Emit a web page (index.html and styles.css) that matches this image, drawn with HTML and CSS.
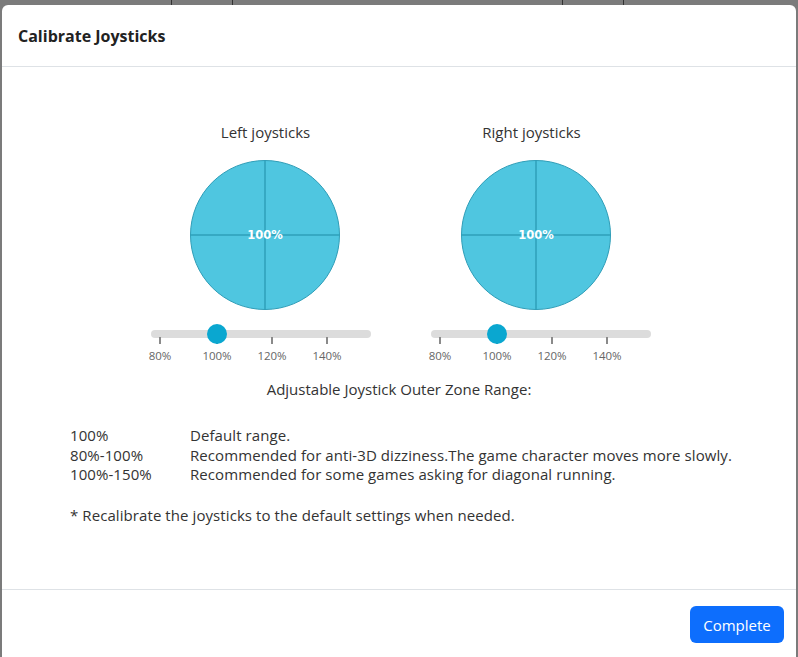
FILE: index.html
```html
<!DOCTYPE html>
<html>
<head>
<meta charset="utf-8">
<link rel="stylesheet" href="styles.css">
</head>
<body>
<div class="backdrop">
  <div class="strip">
    <span class="vline l1"></span><span class="vline l2"></span><span class="vline l3"></span><span class="vline l4"></span>
  </div>
  <div class="modal">
    <div class="modal-header">
      <h1 class="title">Calibrate Joysticks</h1>
    </div>
    <div class="modal-body">
      <div class="sticks">
        <div class="stick stick-left">
          <div class="stick-label">Left joysticks</div>
          <div class="circle"><span class="hline"></span><span class="vl"></span><span class="pct">100%</span></div>
          <div class="slider">
            <div class="track"></div>
            <span class="thumb" style="left:66px"></span>
            <span class="tick" style="left:9px"></span>
            <span class="tick" style="left:66px"></span>
            <span class="tick" style="left:121px"></span>
            <span class="tick" style="left:176px"></span>
            <span class="tlabel" style="left:9px">80%</span>
            <span class="tlabel" style="left:66px">100%</span>
            <span class="tlabel" style="left:121px">120%</span>
            <span class="tlabel" style="left:176px">140%</span>
          </div>
        </div>
        <div class="stick stick-right">
          <div class="stick-label">Right joysticks</div>
          <div class="circle"><span class="hline"></span><span class="vl"></span><span class="pct">100%</span></div>
          <div class="slider">
            <div class="track"></div>
            <span class="thumb" style="left:66px"></span>
            <span class="tick" style="left:9px"></span>
            <span class="tick" style="left:66px"></span>
            <span class="tick" style="left:121px"></span>
            <span class="tick" style="left:176px"></span>
            <span class="tlabel" style="left:9px">80%</span>
            <span class="tlabel" style="left:66px">100%</span>
            <span class="tlabel" style="left:121px">120%</span>
            <span class="tlabel" style="left:176px">140%</span>
          </div>
        </div>
      </div>
      <div class="range-title">Adjustable Joystick Outer Zone Range:</div>
      <div class="ranges">
        <div class="r-key">100%</div><div class="r-val">Default range.</div>
        <div class="r-key">80%-100%</div><div class="r-val">Recommended for anti-3D dizziness.The game character moves more slowly.</div>
        <div class="r-key">100%-150%</div><div class="r-val">Recommended for some games asking for diagonal running.</div>
      </div>
      <div class="note">* Recalibrate the joysticks to the default settings when needed.</div>
    </div>
    <div class="modal-footer">
      <button class="btn">Complete</button>
    </div>
  </div>
</div>
</body>
</html>
```
FILE: styles.css
```css
* { box-sizing: border-box; }
html, body { margin: 0; padding: 0; }
body {
  width: 798px; height: 657px; overflow: hidden;
  background: #7b7b7b;
  font-family: "Open Sans", "Noto Sans", sans-serif;
  color: #333;
}
.backdrop { display: flex; flex-direction: column; height: 657px; }
.strip { position: relative; height: 5px; flex: none; }
.vline { position: absolute; top: 0; width: 1px; height: 5px; background: #333; }
.l1 { left: 171px; } .l2 { left: 232px; } .l3 { left: 562px; } .l4 { left: 623px; }
.modal {
  margin-left: 2px; width: 794px; flex: 1;
  background: #fff; border-radius: 6px 6px 0 0;
  display: flex; flex-direction: column;
}
.modal-header {
  height: 62px; flex: none; padding: 0 16px;
  display: flex; align-items: center;
  border-bottom: 1px solid #dee2e6;
}
.title { margin: 0; font-size: 16px; font-weight: 700; color: #222; }
.modal-body { flex: 1; padding-top: 55px; }
.sticks { display: flex; justify-content: center; gap: 60px; padding-left: 4px; }
.stick { width: 220px; display: flex; flex-direction: column; align-items: center; }
.stick-label { font-size: 15px; line-height: 20px; color: #333; }
.stick-left .stick-label { margin-left: 9px; }
.stick-right .stick-label { margin-right: 19px; }
.stick-left .circle { margin-left: 8px; }
.stick-right .circle { margin-right: 10px; }
.circle {
  position: relative; margin-top: 18px;
  width: 150px; height: 150px; border-radius: 50%;
  background: #4fc6e0; border: 1.5px solid #2f9db7;
  display: flex; align-items: center; justify-content: center;
  overflow: hidden;
}
.hline { position: absolute; left: 0; right: 0; top: 50%; height: 1.5px; margin-top: -1px; background: #36a9c3; }
.vl { position: absolute; top: 0; bottom: 0; left: 50%; width: 1.5px; margin-left: -1px; background: #36a9c3; }
.pct { position: relative; color: #fff; font-weight: 700; font-size: 11.5px; font-family: "DejaVu Sans", sans-serif; }
.slider { position: relative; width: 220px; height: 56px; margin-top: 14px; }
.track { position: absolute; left: 0; right: 0; top: 6px; height: 8px; border-radius: 4px; background: #dcdcdc; }
.tick { position: absolute; top: 13px; width: 2px; height: 7px; margin-left: -1px; background: #8a8a8a; }
.thumb {
  position: absolute; top: 0; width: 20px; height: 20px; margin-left: -10px;
  border-radius: 50%; background: #0aa7d0; z-index: 2;
}
.tlabel {
  position: absolute; top: 24px; width: 40px; margin-left: -20px; text-align: center;
  font-size: 11.5px; color: #666; line-height: 16px;
}
.range-title { text-align: center; font-size: 15px; line-height: 20px; margin-top: -1px; }
.ranges {
  display: grid; grid-template-columns: 120px 1fr;
  margin: 27px 0 0 68px; font-size: 15px; line-height: 19.5px; letter-spacing: 0.08px;
}
.note { margin: 20px 0 0 68px; font-size: 15px; line-height: 20px; letter-spacing: 0.08px; }
.modal-footer {
  flex: none; height: 68px; border-top: 1px solid #dee2e6;
  display: flex; justify-content: flex-end; align-items: flex-start;
  padding: 16px 12px 0 0;
}
.btn {
  background: #0d6efd; color: #fff; border: none; border-radius: 6px;
  width: 94px; height: 37px; font-size: 15px;
  font-family: "Open Sans", "Noto Sans", sans-serif;
}
```
